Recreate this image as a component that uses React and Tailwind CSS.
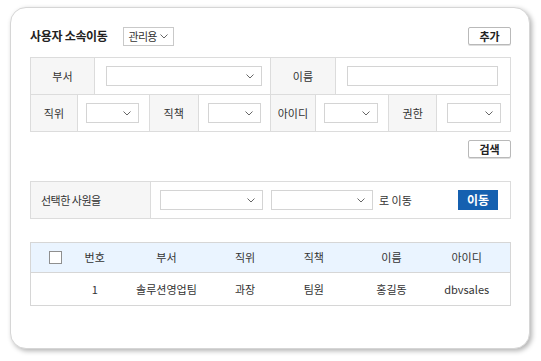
import React from 'react';

const font = { fontFamily: '"Noto Sans CJK KR", "Noto Sans", sans-serif' };

function Chevron() {
  return (
    <svg width="8" height="5" viewBox="0 0 8 5" className="shrink-0">
      <polyline points="0.5,0.5 4,4 7.5,0.5" fill="none" stroke="#666" strokeWidth="1" />
    </svg>
  );
}

function Select({ className = '' }) {
  return (
    <div className={`flex h-[20px] items-center justify-end border border-[#d4d4d4] bg-white pr-[7px] ${className}`}>
      <Chevron />
    </div>
  );
}

function Label({ children, className = '' }) {
  return (
    <div className={`flex items-center justify-center bg-[#f6f6f6] border-r border-[#dcdcdc] text-[11px] text-[#333] ${className}`}>
      {children}
    </div>
  );
}

function Value({ children, className = '' }) {
  return <div className={`flex items-center border-r border-[#dcdcdc] ${className}`}>{children}</div>;
}

function SmallButton({ children }) {
  return (
    <button className="flex h-[18px] w-[43px] items-center justify-center rounded-[2px] border border-[#b9b9b9] bg-white text-[11px] font-bold text-[#222] shadow-[0_1px_0_#ddd]">
      {children}
    </button>
  );
}

const columns = [
  { key: 'check', w: 'w-[48px]' },
  { key: 'no', label: '번호', w: 'w-[32px]' },
  { key: 'dept', label: '부서', w: 'w-[112px]' },
  { key: 'pos', label: '직위', w: 'w-[46px]' },
  { key: 'duty', label: '직책', w: 'w-[92px]' },
  { key: 'name', label: '이름', w: 'w-[64px]' },
  { key: 'id', label: '아이디', w: 'w-[87px]' },
];

const rows = [{ no: '1', dept: '솔루션영업팀', pos: '과장', duty: '팀원', name: '홍길동', id: 'dbvsales' }];

export default function App() {
  return (
    <div className="min-h-[361px] w-[541px] bg-white pl-[10px] pt-[7px]" style={font}>
      <div className="h-[342px] w-[520px] rounded-[16px] border border-[#d6d6d6] bg-white pl-[19px] pr-[18px] pt-[18px] shadow-[2px_2px_5px_rgba(0,0,0,0.3)]">
        {/* title row */}
        <div className="flex h-[20px] items-center justify-between">
          <div className="flex items-center">
            <h1 className="text-[12px] font-bold tracking-[-0.3px] text-[#222]">사용자 소속이동</h1>
            <div className="ml-[15px] flex h-[19px] w-[51px] items-center justify-between border border-[#c9c9c9] bg-white pl-[5px] pr-[5px] text-[11px] tracking-[-0.8px] text-[#333]">
              관리용
              <Chevron />
            </div>
          </div>
          <SmallButton>추가</SmallButton>
        </div>

        {/* search table */}
        <div className="mt-[11px] border-l border-t border-[#dcdcdc]">
          <div className="flex h-[37px] border-b border-[#dcdcdc]">
            <Label className="w-[64px]">부서</Label>
            <Value className="w-[176px] pl-[11px]">
              <Select className="w-[156px]" />
            </Value>
            <Label className="w-[66px]">이름</Label>
            <Value className="w-[175px] pl-[11px]">
              <div className="h-[20px] w-[151px] border border-[#d4d4d4] bg-white" />
            </Value>
          </div>
          <div className="flex h-[37px] border-b border-[#dcdcdc]">
            <Label className="w-[47px]">직위</Label>
            <Value className="w-[72px] pl-[8px]">
              <Select className="w-[53px]" />
            </Value>
            <Label className="w-[49px]">직책</Label>
            <Value className="w-[72px] pl-[9px]">
              <Select className="w-[53px]" />
            </Value>
            <Label className="w-[46px]">아이디</Label>
            <Value className="w-[73px] pl-[8px]">
              <Select className="w-[54px]" />
            </Value>
            <Label className="w-[48px]">권한</Label>
            <Value className="w-[74px] pl-[10px]">
              <Select className="w-[54px]" />
            </Value>
          </div>
        </div>

        <div className="mt-[8px] flex justify-end">
          <SmallButton>검색</SmallButton>
        </div>

        {/* move row */}
        <div className="mt-[23px] flex h-[38px] border border-[#dcdcdc]">
          <div className="flex w-[120px] items-center border-r border-[#dcdcdc] bg-[#f6f6f6] pl-[10px] text-[11px] tracking-[-0.5px] text-[#333]">
            선택한 사원을
          </div>
          <div className="flex flex-1 items-center pl-[9px]">
            <Select className="w-[103px]" />
            <Select className="ml-[8px] w-[102px]" />
            <span className="ml-[6px] text-[11px] text-[#333]">로 이동</span>
            <button className="ml-auto mr-[12px] flex h-[20px] w-[40px] items-center justify-center bg-[#1560b0] text-[12px] font-bold text-white">
              이동
            </button>
          </div>
        </div>

        {/* grid */}
        <div className="mt-[23px] border border-[#d6d6d6]">
          <div className="flex h-[30px] border-b border-[#d6d6d6] bg-[#eaf4ff] text-[11px] text-[#333]">
            {columns.map((c) => (
              <div key={c.key} className={`flex items-center justify-center ${c.w}`}>
                {c.key === 'check' ? (
                  <span className="ml-[2px] block h-[13px] w-[13px] border border-[#8f8f8f] bg-white" />
                ) : (
                  c.label
                )}
              </div>
            ))}
          </div>
          {rows.map((r) => (
            <div key={r.no} className="flex h-[32px] bg-white text-[11px] text-[#333]">
              {columns.map((c) => (
                <div key={c.key} className={`flex items-center justify-center ${c.w}`}>
                  {c.key === 'check' ? null : r[c.key]}
                </div>
              ))}
            </div>
          ))}
        </div>
      </div>
    </div>
  );
}
